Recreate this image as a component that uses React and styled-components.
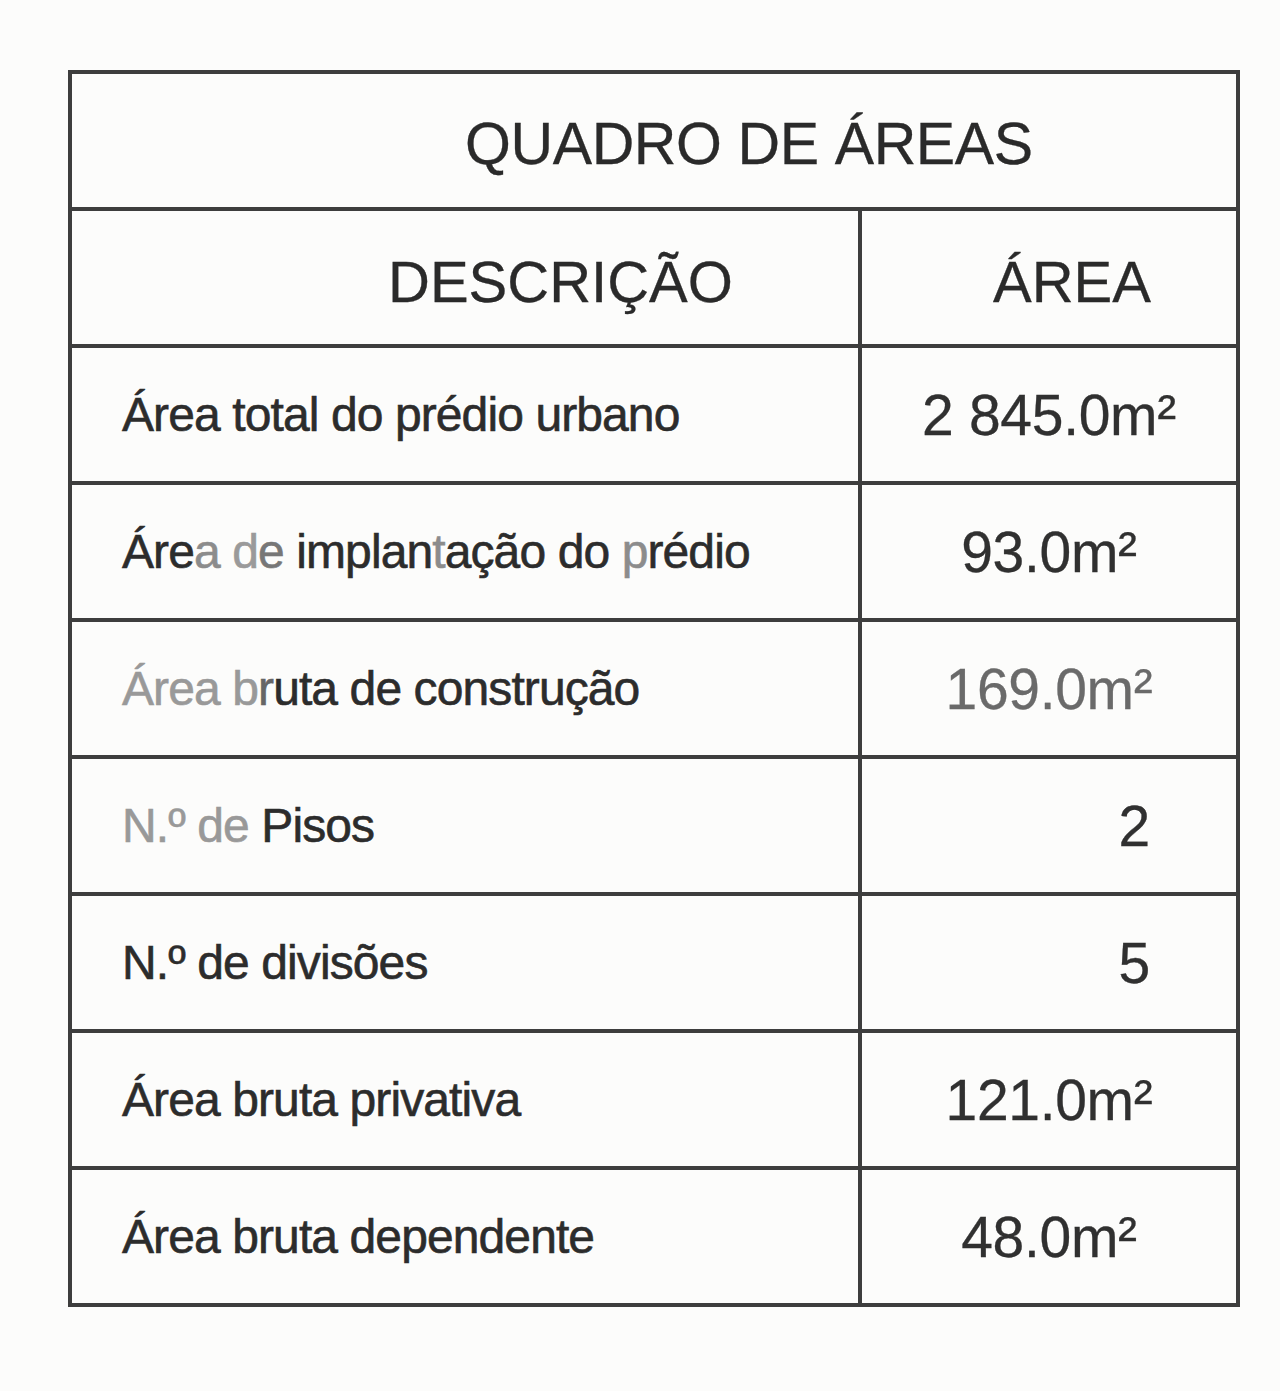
import React from 'react'
import styled, { createGlobalStyle } from 'styled-components'

const GlobalStyle = createGlobalStyle`
  html, body {
    margin: 0;
    padding: 0;
    background: #fcfcfb;
  }
  body {
    font-family: "Liberation Sans", Arial, sans-serif;
    color: #2f2f2f;
  }
`

const Page = styled.div`
  width: 1280px;
  height: 1391px;
  box-sizing: border-box;
  padding: 70px 40px 0 68px;
`

const Table = styled.div`
  display: grid;
  grid-template-columns: 786px 1fr;
  grid-auto-rows: 133px;
  gap: 4px;
  padding: 4px;
  width: 1172px;
  box-sizing: border-box;
  background: #3d3d3d;
`

const Cell = styled.div`
  background: #fcfcfb;
  display: flex;
  align-items: center;
  justify-content: ${p => p.$justify || 'flex-start'};
  padding: ${p => p.$pad || '0 0 0 50px'};
  grid-column: ${p => (p.$span ? '1 / -1' : 'auto')};
  box-sizing: border-box;
  white-space: nowrap;
`

const Title = styled.span`
  font-size: 59px;
  letter-spacing: -0.4px;
  color: #2a2a2a;
  padding-top: 6px;
  -webkit-text-stroke: 0.3px #2a2a2a;
`

const Heading = styled.span`
  font-size: 58px;
  color: #2a2a2a;
  padding-top: 8px;
  -webkit-text-stroke: 0.3px #2a2a2a;
`

const Label = styled.span`
  font-size: 48px;
  letter-spacing: -0.9px;
  color: #2c2c2c;
  -webkit-text-stroke: 0.6px currentColor;
`

const Value = styled.span`
  font-size: 57px;
  letter-spacing: -0.3px;
  color: #303030;
  -webkit-text-stroke: 0.3px currentColor;
`

const Faded = styled.span`
  color: ${p => p.$tone || '#8c8c8c'};
`

const rows = [
  {
    label: <>Área total do prédio urbano</>,
    value: '2 845.0m²',
  },
  {
    label: (
      <>
        Áre<Faded>a</Faded> <Faded $tone="#9a9a9a">d</Faded>
        <Faded $tone="#777">e</Faded> implan<Faded>t</Faded>ação do{' '}
        <Faded>p</Faded>rédio
      </>
    ),
    value: '93.0m²',
  },
  {
    label: (
      <>
        <Faded $tone="#999">Área b</Faded>
        <Faded $tone="#666">r</Faded>uta de construção
      </>
    ),
    value: <Faded $tone="#6a6a6a">169.0m²</Faded>,
  },
  {
    label: (
      <>
        <Faded $tone="#999">N.º de</Faded> Pisos
      </>
    ),
    value: '2',
    right: true,
  },
  {
    label: <>N.º de divisões</>,
    value: '5',
    right: true,
  },
  { label: <>Área bruta privativa</>, value: '121.0m²' },
  { label: <>Área bruta dependente</>, value: '48.0m²' },
]

export default function App() {
  return (
    <>
      <GlobalStyle />
      <Page>
        <Table>
          <Cell $span $pad="0 0 0 393px">
            <Title>QUADRO DE ÁREAS</Title>
          </Cell>
          <Cell $pad="0 0 0 316px">
            <Heading>DESCRIÇÃO</Heading>
          </Cell>
          <Cell $pad="0 0 0 131px">
            <Heading>ÁREA</Heading>
          </Cell>
          {rows.map((row, i) => (
            <React.Fragment key={i}>
              <Cell>
                <Label>{row.label}</Label>
              </Cell>
              <Cell
                $justify={row.right ? 'flex-end' : 'center'}
                $pad={row.right ? '0 86px 0 0' : '0'}
              >
                <Value>{row.value}</Value>
              </Cell>
            </React.Fragment>
          ))}
        </Table>
      </Page>
    </>
  )
}
